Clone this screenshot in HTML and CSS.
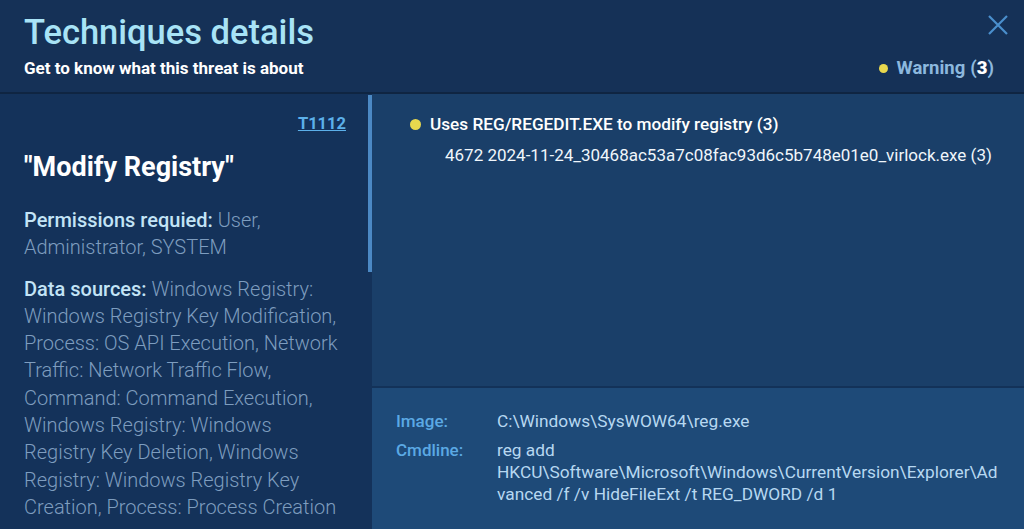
FILE: index.html
```html
<!DOCTYPE html>
<html>
<head>
<meta charset="utf-8">
<link rel="stylesheet" href="styles.css">
</head>
<body>
<div class="modal">
  <header class="header">
    <div class="heading">
      <h1 class="title">Techniques details</h1>
      <p class="subtitle">Get to know what this threat is about</p>
    </div>
    <div class="header-side">
      <button class="close" aria-label="Close">
        <svg width="24" height="24" viewBox="0 0 24 24"><path d="M3 3 L21 21 M21 3 L3 21" stroke="#4a8fcd" stroke-width="2.2" fill="none"/></svg>
      </button>
      <div class="warning"><span class="dot"></span>Warning <span class="count">(<b>3</b>)</span></div>
    </div>
  </header>
  <div class="body">
    <aside class="left">
      <div class="tid-row"><a class="tid" href="#">T1112</a></div>
      <h2 class="tname">"Modify Registry"</h2>
      <p class="meta first"><span class="meta-label">Permissions requied:</span> User, Administrator, SYSTEM</p>
      <p class="meta"><span class="meta-label">Data sources:</span> Windows Registry: Windows Registry Key Modification, Process: OS API Execution, Network Traffic: Network Traffic Flow, Command: Command Execution, Windows Registry: Windows Registry Key Deletion, Windows Registry: Windows Registry Key Creation, Process: Process Creation</p>
    </aside>
    <main class="right">
      <section class="events">
        <div class="event"><span class="dot big"></span>Uses REG/REGEDIT.EXE to modify registry (3)</div>
        <div class="proc">4672 2024-11-24_30468ac53a7c08fac93d6c5b748e01e0_virlock.exe (3)</div>
      </section>
      <section class="details">
        <div class="drow"><span class="dlabel">Image:</span><span class="dval">C:\Windows\SysWOW64\reg.exe</span></div>
        <div class="drow"><span class="dlabel">Cmdline:</span><span class="dval">reg add HKCU\Software\Microsoft\Windows\CurrentVersion\Explorer\Advanced /f /v HideFileExt /t REG_DWORD /d 1</span></div>
      </section>
    </main>
  </div>
</div>
</body>
</html>
```
FILE: styles.css
```css
* { box-sizing: border-box; }
html, body { margin: 0; padding: 0; }
body {
  width: 1024px;
  height: 529px;
  overflow: hidden;
  font-family: Roboto, "Liberation Sans", sans-serif;
  background: #14315a;
}
.modal {
  display: flex;
  flex-direction: column;
  height: 529px;
}
.header {
  height: 94px;
  flex: none;
  display: flex;
  justify-content: space-between;
  background: #153157;
  border-bottom: 2px solid #0f2542;
  padding: 0 24px 0 24px;
}
.title {
  margin: 12px 0 0 0;
  font-size: 34.5px;
  line-height: 40px;
  font-weight: 500;
  color: #a8e3f6;
}
.subtitle {
  margin: 6px 0 0 0;
  font-size: 17px;
  line-height: 20px;
  font-weight: 700;
  color: #ffffff;
}
.header-side {
  display: flex;
  flex-direction: column;
  align-items: flex-end;
  justify-content: space-between;
  padding: 13px 0 13px 0;
  margin-right: -10px;
}
.close {
  background: none;
  border: 0;
  padding: 0;
  width: 24px;
  height: 24px;
  cursor: pointer;
}
.close svg { display: block; }
.warning {
  display: flex;
  align-items: center;
  margin-right: 16px;
  font-size: 18.5px;
  font-weight: 700;
  color: #8cb8de;
}
.warning .count { margin-left: 5px; }
.warning b { color: #ffffff; }
.dot {
  display: inline-block;
  width: 9px;
  height: 9px;
  border-radius: 50%;
  background: #e8d84e;
  margin-right: 9px;
}
.body {
  flex: 1;
  display: flex;
  min-height: 0;
}
.left {
  width: 372px;
  flex: none;
  background: #14325a;
  padding: 20px 26px 0 24px;
  overflow: hidden;
  position: relative;
}
.left::after {
  content: "";
  position: absolute;
  right: 0;
  top: 1px;
  width: 4px;
  height: 177px;
  background: #4c89c4;
}
.tid-row { text-align: right; }
.tid {
  font-size: 16.5px;
  font-weight: 700;
  color: #5cb0ea;
  text-decoration: underline;
}
.tname {
  margin: 18px 0 0 0;
  font-size: 27px;
  line-height: 32px;
  font-weight: 700;
  color: #ffffff;
}
.meta {
  margin: 14px -2px 0 0;
  font-size: 20px;
  line-height: 27.3px;
  font-weight: 300;
  color: #7e9dbf;
}
.meta.first { margin-top: 24px; }
.meta-label {
  font-weight: 500;
  color: #c3e4f6;
}
.right {
  flex: 1;
  display: flex;
  flex-direction: column;
  background: #1a3f69;
}
.events {
  flex: 1;
  padding: 19px 24px 0 38px;
}
.event {
  display: flex;
  align-items: center;
  font-size: 17.2px;
  font-weight: 500;
  color: #ffffff;
  line-height: 22px;
}
.dot.big { width: 11px; height: 11px; margin-right: 9px; }
.proc {
  margin: 9px 0 0 35px;
  font-size: 17px;
  color: #f0f6fb;
  line-height: 22px;
}
.details {
  flex: none;
  height: 143px;
  background: #1e4a78;
  border-top: 2px solid #133259;
  padding: 22px 19px 0 24px;
}
.drow {
  display: flex;
  margin-bottom: 7px;
}
.dlabel {
  width: 101px;
  flex: none;
  font-size: 17px;
  line-height: 22px;
  font-weight: 500;
  color: #5ba9e4;
}
.dval {
  flex: 1;
  font-size: 17.3px;
  line-height: 22px;
  color: #b7d8f1;
  overflow-wrap: anywhere;
}
```
